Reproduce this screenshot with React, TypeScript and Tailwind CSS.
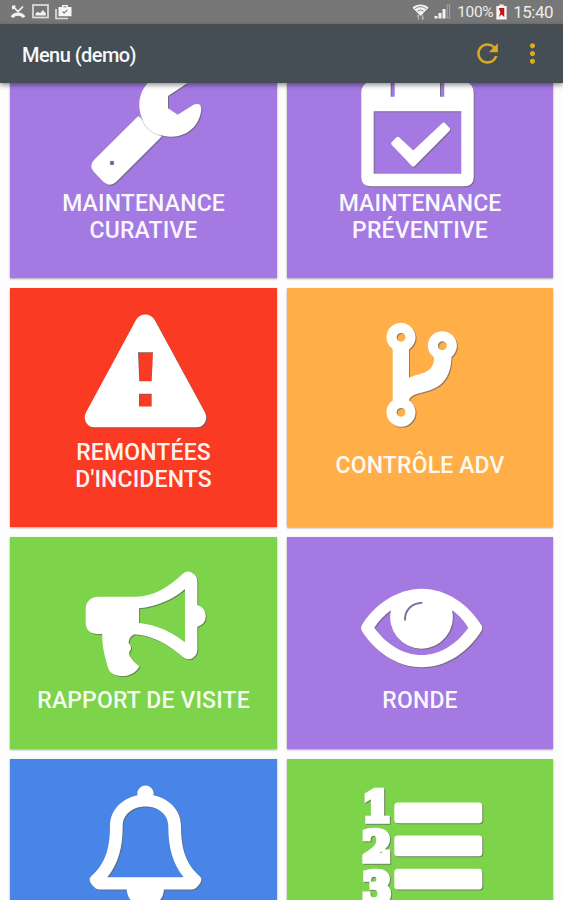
import React from 'react';
import { MdRefresh, MdMoreVert } from 'react-icons/md';

interface Tile {
  id: string;
  label: string;
  color: string;
  icon: React.ReactNode;
}

const WrenchIcon = (
  <>
    <path d="M58.3 57 L14 101 Q8.5 107 14 113 L22 121.5 Q29 129 36 123 L81.7 77.5Z" />
    <path d="M107.3 24.3 L88 37 V49.3 L97.7 55.7 L114 45.6 Q121 43 121.3 50 C120 66 108 77.7 91 77.7 C73 77.7 59.3 64 59.3 46 C59.3 28 73 14 91 14Z" />
    <path d="M60.5 57 C64 68 71 74.5 81 77" fill="none" stroke="#c9c5d0" strokeWidth="0.8" />
    <circle cx="32" cy="104" r="2.2" fill="#6f6698" />
  </>
);

const CalendarIcon = (
  <>
    <path
      fillRule="evenodd"
      d="M15 22.5 H34.7 V37.7 H38.7 V22.5 H84 V37.7 H88.3 V22.5 H108 Q117.7 24 117.7 34 V118 Q117.7 127.3 108 127.3 H15 Q5.3 127.3 5.3 118 V34 Q5.3 24 15 22.5Z M17.7 52.3 V114.7 H105.3 V52.3Z"
    />
    <path
      d="M37.2 84.5 L41.7 79.8 L57.3 94.2 L87.6 65.6 L92.2 70.3 L57.3 105.5Z"
      stroke="white"
      strokeWidth="4"
      strokeLinejoin="round"
    />
  </>
);

const WarningIcon = (
  <path
    fillRule="evenodd"
    d="M56 12 C59.5 4.5 71 4.5 74.7 12 L125 104.5 C128.5 111 124 119.3 117 119.3 H14 C7 119.3 2.5 111 6 104.5Z M58 44.3 L59.3 73.3 H71.7 L73 44.3Z M59 85.7 V98.4 H71.7 V85.7Z"
  />
);

const ForkIcon = (
  <path
    fillRule="evenodd"
    d="M45 14.8 A14.5 14.5 0 0 1 53 41.4 V69.6 C62 66 70 65.5 74.5 60.5 Q78 56.5 78 49.5 A14.5 14.5 0 1 1 95.5 48.9 C95 62 92 70 84 77 C75 84 64 84 57 87.5 Q53.5 89.5 53 92.2 A14.5 14.5 0 1 1 36.7 92.4 V41.2 A14.5 14.5 0 0 1 45 14.8Z M45 24.9 A4.4 4.4 0 1 0 45.1 24.9Z M86.3 33.3 A4.4 4.4 0 1 0 86.4 33.3Z M45 99.9 A4.4 4.4 0 1 0 45.1 99.9Z"
  />
);

const MegaphoneIcon = (
  <path
    fillRule="evenodd"
    d="M17 39.7 H56 C74 39.7 90 29 102 17.5 Q107 12.5 112 16 Q117.3 18.5 117.3 25 V48 Q125.7 50.5 125.7 59 Q125.7 67 117.3 69.7 V93 Q117 98.5 112 101.5 Q107.5 103.5 103 100 C88 87.5 73 78.5 54.5 77.3 Q49 79.5 48.5 86 Q52 89 50.8 92.5 Q47.8 95.5 50 99.5 Q53 104.5 59.3 109.5 C55 117 48 119.5 41 119 C34 118.5 29 116 27.8 110 C25 99 22 91 22.3 77 H17 Q5.7 76 5.7 65.5 V51.5 Q6 41 17 39.7Z M59 51.3 V66 C77 68 91 74.5 105 85.3 V32 C92 43 77 49.5 59 51.3Z"
  />
);

const EyeIcon = (
  <>
    <path
      fillRule="evenodd"
      d="M6 68 C18 48 41 31.7 65.7 31.7 C91 31.7 113 48 125.3 68 Q127.2 71 125.3 74 C113 94 91 110.3 65.7 110.3 C41 110.3 18 94 6 74 Q4.2 71 6 68Z M18.3 70.7 C30 87 47 98 65.7 98 C84 98 101 87 112.3 70.7 Q105 59 96 53.3 A31.3 31.3 0 1 1 35 53.3 Q25.5 60 18.3 70.7Z"
    />
    <path d="M49 63.5 C48.5 53 56 46 66.3 45.7" fill="none" stroke="#7e74a0" strokeWidth="2" />
  </>
);

const BellIcon = (
  <>
    <circle cx="65.5" cy="14.7" r="8.2" />
    <path
      fillRule="evenodd"
      d="M65.5 15.5 C84 15.5 101 28 101 47 C101 72 107 86 120 97.5 Q123 100.5 119.5 105 Q116 110.5 111 110.5 H20 Q15 110.5 11.5 105 Q8 100.5 11 97.5 C24 86 30 72 30 47 C30 28 47 15.5 65.5 15.5Z M65.5 27.5 C52 27.5 42.7 36 42.7 47 C42.7 69 38 85 27.3 98.3 H103.7 C93 85 88.3 69 88.3 47 C88.3 36 79 27.5 65.5 27.5Z"
    />
    <path d="M46.7 109 H84 C84 134 46.7 134 46.7 109Z" />
  </>
);

const ListIcon = (
  <>
    <g
      fontFamily="'DejaVu Serif', serif"
      fontWeight="700"
      fontSize="41"
      textAnchor="middle"
      stroke="white"
      strokeWidth="5.6"
    >
      <text x="20.8" y="41.5">1</text>
      <text x="20.8" y="81.8">2</text>
      <text x="20.8" y="123">3</text>
    </g>
    <rect x="38.3" y="23.5" width="88" height="20.7" rx="3.5" />
    <rect x="38.3" y="56.5" width="88" height="20.7" rx="3.5" />
    <rect x="38.3" y="89.8" width="88" height="20.7" rx="3.5" />
  </>
);

const tiles: Tile[] = [
  { id: 'curative', label: 'MAINTENANCE CURATIVE', color: 'bg-[#a479e2]', icon: WrenchIcon },
  { id: 'preventive', label: 'MAINTENANCE PRÉVENTIVE', color: 'bg-[#a479e2]', icon: CalendarIcon },
  { id: 'incidents', label: "REMONTÉES D'INCIDENTS", color: 'bg-[#fa3a22]', icon: WarningIcon },
  { id: 'adv', label: 'CONTRÔLE ADV', color: 'bg-[#ffae48]', icon: ForkIcon },
  { id: 'rapport', label: 'RAPPORT DE VISITE', color: 'bg-[#7dd34a]', icon: MegaphoneIcon },
  { id: 'ronde', label: 'RONDE', color: 'bg-[#a479e2]', icon: EyeIcon },
  { id: 'alertes', label: '', color: 'bg-[#4885e6]', icon: BellIcon },
  { id: 'liste', label: '', color: 'bg-[#7dd34a]', icon: ListIcon },
];

function StatusBar() {
  return (
    <div className="h-6 shrink-0 bg-[#777777] flex items-center justify-between pl-[10px] pr-[10px] text-[#ececec]">
      <div className="flex items-center gap-[6px] -mt-px">
        <svg className="w-4 h-4" viewBox="0 0 16 16" fill="none" stroke="#f2f2f2">
          <path d="M3 2.5 L8 7.5 L13 2.5 M2.8 1.8 V5.2 M2.2 2.4 H5.5" strokeWidth="1.7" />
          <path d="M2 13.2 C4.5 9 11.5 9 14 13.2" strokeWidth="3.2" />
        </svg>
        <svg className="w-[17px] h-[15px]" viewBox="0 0 17 15">
          <rect x="1" y="1" width="15" height="12.5" fill="none" stroke="#dedede" strokeWidth="1.7" />
          <path d="M3.5 11.5 V9.5 L6 7.8 L8 9.2 L11 6 L13.8 9.5 V11.5Z" fill="#f2f2f2" />
        </svg>
        <svg className="w-[17px] h-4" viewBox="0 0 17 16">
          <path d="M1 5 V14.5 H13" fill="none" stroke="#dcdcdc" strokeWidth="1.7" />
          <path d="M3.5 3 H7 V1 H13 V3 H16.5 V12.3 H3.5Z" fill="#f5f5f5" />
          <path d="M8.5 2.8 H11.5" stroke="#777777" strokeWidth="1" />
          <path d="M7.6 7.5 L9.2 9 L12.4 5.8" fill="none" stroke="#777777" strokeWidth="1.1" />
        </svg>
      </div>
      <div className="flex items-center -mt-px">
        <svg className="w-[17px] h-[17px] mr-[5px]" viewBox="0 0 17 17">
          <path d="M0.5 4.8 C5 0.5 12 0.5 16.5 4.8 L8.5 13Z" fill="#f2f2f2" />
          <path d="M3 5.8 C6.5 3 10.5 3 14 5.8 M5.5 8.3 C7.5 6.7 9.5 6.7 11.5 8.3" fill="none" stroke="#777777" strokeWidth="0.9" />
          <path d="M6.5 16.5 V12 M5 13.5 L6.5 12 M10.5 11.5 V16 L12 14.5" fill="none" stroke="#b5b5b5" strokeWidth="1.3" />
        </svg>
        <svg className="w-[17px] h-[15px] mr-[6px]" viewBox="0 0 17 15">
          <rect x="0.5" y="12" width="3" height="2.5" fill="#f2f2f2" />
          <rect x="4.5" y="9" width="3" height="5.5" fill="#f2f2f2" />
          <rect x="8.5" y="5" width="3" height="9.5" fill="#f2f2f2" />
          <rect x="13.2" y="1" width="2.4" height="13" fill="none" stroke="#a8a8a8" strokeWidth="1" />
        </svg>
        <span className="text-[15.5px] leading-6 tracking-[-0.4px] pt-px">100%</span>
        <svg className="w-[11px] h-4 ml-[3px] mr-[6px]" viewBox="0 0 10 16" preserveAspectRatio="none">
          <path d="M3 0.5 H7 V2 H9.7 V15.5 H0.3 V2 H3Z" fill="#f5f5f5" />
          <path d="M2.5 4 H7.5 V13 L5 10.5 L2.5 13 L4 8.5Z" fill="#c51212" />
        </svg>
        <span className="text-[17px] leading-6 tracking-[-0.5px] pt-px">15:40</span>
      </div>
    </div>
  );
}

function AppBar() {
  return (
    <div className="relative z-10 h-[59px] shrink-0 bg-[#444e54] flex items-center pl-[22px] pr-[15px] shadow-[0_2px_5px_rgba(0,0,0,0.45)]">
      <h1 className="flex-1 text-[20px] leading-6 font-medium text-[#f5f8fa] tracking-[-0.55px] pt-[3px]">Menu (demo)</h1>
      <button className="mr-[14px]">
        <MdRefresh className="w-[31px] h-[31px] text-[#dba922]" />
      </button>
      <button>
        <MdMoreVert className="w-[31px] h-[31px] text-[#dba922]" />
      </button>
    </div>
  );
}

function MenuTile({ tile }: { tile: Tile }) {
  return (
    <div className={`flex flex-col items-center pt-5 shadow-[0_1px_2px_rgba(0,0,0,0.35)] ${tile.color}`}>
      <svg
        className="w-32 h-32 shrink-0 overflow-visible drop-shadow-[1px_1px_0.6px_rgba(100,100,100,0.7)]"
        viewBox="0 0 128 128"
        fill="white"
      >
        {tile.icon}
      </svg>
      <div className="mt-[2px] mb-[34px] flex-1 w-[230px] flex items-center justify-center text-center text-[23px] leading-[27px] tracking-[0.15px] font-medium text-white/95">
        <span className={tile.label.includes('VISITE') ? 'whitespace-nowrap' : 'max-w-[190px]'}>{tile.label}</span>
      </div>
    </div>
  );
}

export default function App() {
  return (
    <div className="w-full h-[900px] flex flex-col overflow-hidden bg-[#fdfdfd] font-['Roboto',sans-serif]">
      <StatusBar />
      <AppBar />
      <div className="flex-1 min-h-0 overflow-hidden">
        <div className="-mt-11 pl-[10.3px] pr-[9.7px] grid grid-cols-2 gap-[10px] grid-rows-[239px_239px_211.5px_211.5px]">
          {tiles.map(tile => (
            <MenuTile key={tile.id} tile={tile} />
          ))}
        </div>
      </div>
    </div>
  );
}
